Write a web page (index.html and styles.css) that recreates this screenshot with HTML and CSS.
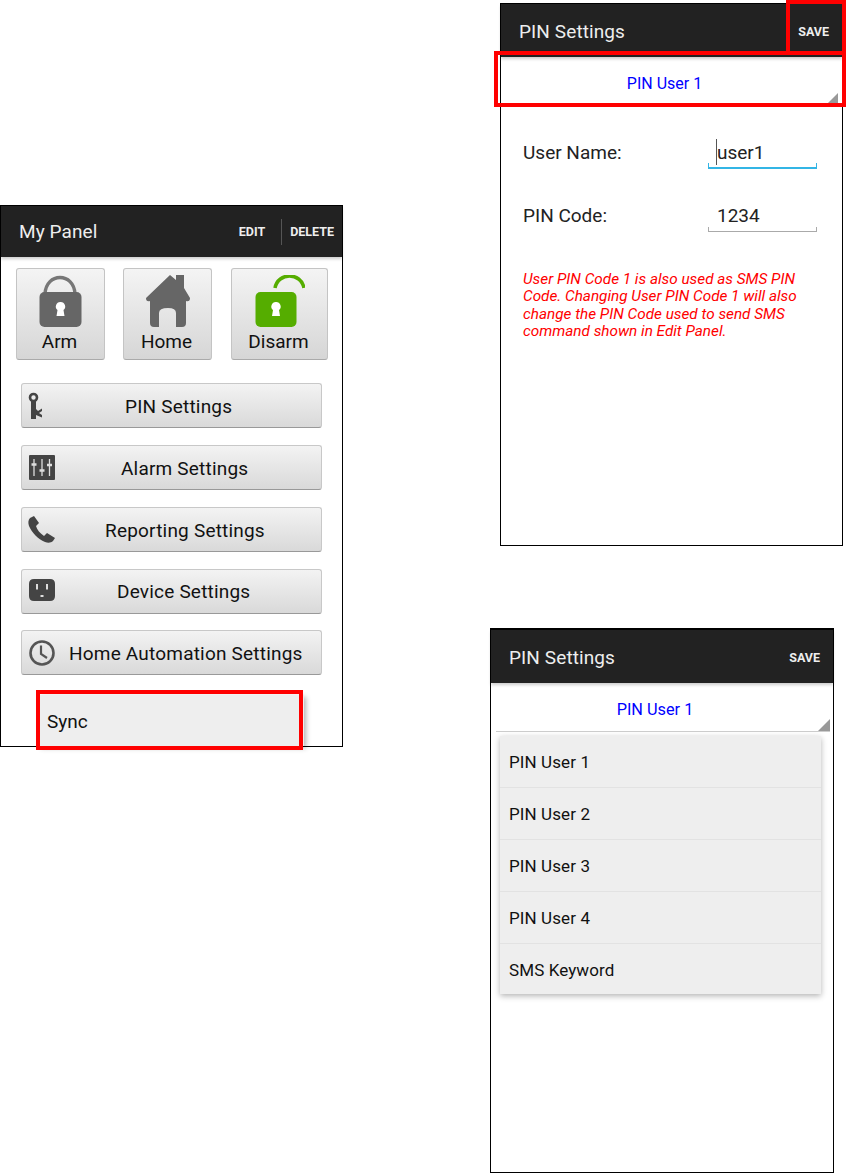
FILE: index.html
```html
<!DOCTYPE html>
<html lang="en">
<head>
    <meta charset="UTF-8">
    <meta name="viewport" content="width=device-width, initial-scale=1.0">
    <title>PIN Settings</title>
    <link rel="stylesheet" href="styles.css">
</head>
<body>
    <!-- main panel screen -->
    <div class="phone phone-panel">
        <div class="action-bar">
            <span class="bar-title">My Panel</span>
            <span class="bar-action">EDIT</span>
            <span class="bar-divider"></span>
            <span class="bar-action bar-action-last">DELETE</span>
        </div>
        <div class="mode-row">
            <div class="mode-btn mode-arm">
                <svg class="mode-icon" width="44" height="52" viewBox="0 0 44 52">
                    <path d="M6 19 C7 -3 35 -3 36 19" fill="none" stroke="#777" stroke-width="3.500"/>
                    <rect x="0.500" y="17" width="42" height="35" rx="5" fill="#666"/>
                    <path d="M21.500 27a4.500 4.500 0 0 1 3 8l1 6h-8l1-6a4.500 4.500 0 0 1 3-8z" fill="#fff"/>
                </svg>
                <span>Arm</span>
            </div>
            <div class="mode-btn mode-home">
                <svg class="mode-icon" width="44" height="52" viewBox="0 0 44 52">
                    <path d="M24 0 L30 5 V0 H38 V13 L44 23 Q44 27 40 26 V48 Q40 52 36 52 H30 V38 Q30 33 22 33 Q13 33 13 38 V52 H8 Q4 52 4 48 V26 Q0 27 0 23 Z" fill="#666"/>
                </svg>
                <span>Home</span>
            </div>
            <div class="mode-btn mode-disarm">
                <svg class="mode-icon" width="50" height="52" viewBox="0 0 50 52">
                    <path d="M20 13 C23 -3 46 -3 49 13" fill="none" stroke="#55ad00" stroke-width="3.500"/>
                    <rect x="0.500" y="17" width="41" height="35" rx="5" fill="#55ad00"/>
                    <path d="M21 27a4.500 4.500 0 0 1 3 8l1 6h-8l1-6a4.500 4.500 0 0 1 3-8z" fill="#fff"/>
                </svg>
                <span>Disarm</span>
            </div>
        </div>
        <div class="menu-list">
            <div class="menu-btn">
                <svg class="menu-icon" width="28" height="28" viewBox="0 0 28 28">
                    <circle cx="5.500" cy="5.500" r="3.500" fill="none" stroke="#444" stroke-width="2.600"/>
                    <path d="M3 9 H8 V17 L10 19 L14 16.500 V19 L11 21 L14 23 V25.500 L8 23 V27 H3 Z" fill="#444"/>
                </svg>
                <span class="menu-label menu-label-pin">PIN Settings</span>
            </div>
            <div class="menu-btn">
                <svg class="menu-icon" width="28" height="28" viewBox="0 0 28 28">
                    <rect x="1" y="1" width="26" height="25" rx="1" fill="#444"/>
                    <path d="M6 5 V22 M14 5 V22 M21.500 5 V22" stroke="#ddd" stroke-width="1.300"/>
                    <path d="M3.500 10.500 H8.500 M11.500 16.500 H16.500 M19 11 H24" stroke="#ddd" stroke-width="2.500"/>
                </svg>
                <span class="menu-label menu-label-alarm">Alarm Settings</span>
            </div>
            <div class="menu-btn">
                <svg class="menu-icon" width="28" height="28" viewBox="0 0 28 28">
                    <path d="M2 2 L6 0 L11 7 L8 10 C9 14 12 17 16 20 L19 17 L27 22 L25 25 C23 27 20 27 17 26 C10 23 4 17 1 10 C0 7 0 4 2 2 Z" fill="#444"/>
                </svg>
                <span class="menu-label menu-label-report">Reporting Settings</span>
            </div>
            <div class="menu-btn">
                <svg class="menu-icon" width="28" height="28" viewBox="0 0 28 28">
                    <path d="M6 1 H22 Q27 1 27 6 V18 Q27 23 22 23 H6 Q1 23 1 18 V6 Q1 1 6 1 Z" fill="#444"/>
                    <path d="M8 6 H10 V11.500 H8 Z M18 6 H20 V11.500 H18 Z M12.500 17 H15.500 V19 H12.500 Z" fill="#ddd"/>
                </svg>
                <span class="menu-label menu-label-device">Device Settings</span>
            </div>
            <div class="menu-btn menu-btn-last">
                <svg class="menu-icon" width="28" height="28" viewBox="0 0 28 28">
                    <circle cx="14" cy="14" r="11.500" fill="none" stroke="#555" stroke-width="2.600"/>
                    <path d="M13 6.500 V15 L19 19" fill="none" stroke="#555" stroke-width="2.200"/>
                </svg>
                <span class="menu-label menu-label-home">Home Automation Settings</span>
            </div>
        </div>
        <div class="overflow-menu">Sync</div>
    </div>
    <div class="callout callout-sync"></div>

    <!-- pin editor -->
    <div class="phone phone-editor">
        <div class="action-bar">
            <span class="bar-title">PIN Settings</span>
            <span class="bar-action bar-action-last">SAVE</span>
        </div>
        <div class="spinner">
            <span class="spinner-text">PIN User 1</span>
            <span class="spinner-arrow"></span>
        </div>
        <div class="form">
            <div class="form-row">
                <span class="form-label">User Name:</span>
                <span class="field field-focus"><span class="cursor"></span>user1</span>
            </div>
            <div class="form-row">
                <span class="form-label">PIN Code:</span>
                <span class="field">1234</span>
            </div>
            <p class="note">User PIN Code 1 is also used as SMS PIN Code. Changing User PIN Code 1 will also change the PIN Code used to send SMS command shown in Edit Panel.</p>
        </div>
    </div>
    <div class="callout callout-save"></div>
    <div class="callout callout-spinner"></div>

    <!-- pin user dropdown -->
    <div class="phone phone-dropdown">
        <div class="action-bar">
            <span class="bar-title">PIN Settings</span>
            <span class="bar-action bar-action-last">SAVE</span>
        </div>
        <div class="spinner spinner-open">
            <span class="spinner-text">PIN User 1</span>
            <span class="spinner-arrow"></span>
        </div>
        <ul class="dropdown">
            <li>PIN User 1</li>
            <li>PIN User 2</li>
            <li>PIN User 3</li>
            <li>PIN User 4</li>
            <li>SMS Keyword</li>
        </ul>
    </div>
</body>
</html>
```

FILE: styles.css
```css
html, body {
    margin: 0;
    padding: 0;
}
body {
    position: relative;
    width: 846px;
    height: 1174px;
    overflow: hidden;
    background-color: #fff;
    font-family: Roboto, 'Liberation Sans', sans-serif;
    color: #222;
}

/* the three screens sit on a free canvas */
.phone {
    position: absolute;
    box-sizing: border-box;
    border: 1px solid #000;
    background-color: #fff;
}
.phone-panel {
    left: 0;
    top: 205px;
    width: 343px;
    height: 542px;
}
.phone-editor {
    left: 500px;
    top: 3px;
    width: 343px;
    height: 543px;
}
.phone-dropdown {
    left: 490px;
    top: 628px;
    width: 344px;
    height: 545px;
    border-width: 2px 1px 1px 1px;
}

.action-bar {
    display: flex;
    align-items: center;
    height: 51px;
    padding-left: 18px;
    background-color: #222;
    color: #eee;
    box-shadow: 0 2px 3px rgba(0, 0, 0, 0.2);
}
.phone-editor .action-bar {
    height: 51px;
    padding-top: 2px;
}
.phone-dropdown .action-bar {
    height: 52px;
    padding-top: 1px;
}
.bar-title {
    flex: 1;
    font-size: 19px;
    letter-spacing: 0.1px;
}
.bar-action {
    font-size: 12.500px;
    font-weight: 700;
    color: #eee;
}
.bar-divider {
    width: 1px;
    height: 26px;
    margin: 0 8px 0 16px;
    background-color: #555;
}
.bar-action-last {
    margin-right: 8px;
}
.phone-editor .bar-action-last,
.phone-dropdown .bar-action-last {
    margin-right: 13px;
}

/* arm / home / disarm */
.mode-row {
    display: flex;
    padding: 11px 0 0 15px;
}
.mode-btn {
    box-sizing: border-box;
    display: flex;
    flex-direction: column;
    align-items: center;
    width: 89px;
    height: 92px;
    padding-top: 6px;
    border: 1px solid #c4c4c4;
    border-bottom-color: #aaa;
    border-radius: 3px;
    background: linear-gradient(#f4f4f4, #d6d6d6);
    font-size: 19px;
    color: #111;
}
.mode-btn span {
    margin-right: 2px;
}
.mode-home {
    margin-left: 18px;
}
.mode-disarm {
    width: 97px;
    margin-left: 19px;
}
.mode-icon {
    display: block;
    margin-bottom: 3px;
}

.menu-list {
    display: flex;
    flex-direction: column;
    gap: 17px;
    padding: 23px 20px 0;
}
.menu-btn {
    box-sizing: border-box;
    display: flex;
    align-items: center;
    position: relative;
    height: 45px;
    padding-left: 6px;
    border: 1px solid #c8c8c8;
    border-bottom-color: #999;
    border-radius: 3px;
    background: linear-gradient(#f3f3f3, #d9d9d9);
    font-size: 19px;
    letter-spacing: 0.2px;
    color: #111;
}
.menu-btn-last {
    margin-top: -1px;
}
.menu-icon {
    display: block;
    flex-shrink: 0;
}
.menu-label {
    position: absolute;
    top: 11px;
    white-space: nowrap;
}
.menu-label-pin { left: 103px; }
.menu-label-alarm { left: 99px; }
.menu-label-report { left: 83px; }
.menu-label-device { left: 95px; top: 10px; }
.menu-label-home { left: 47px; }

.overflow-menu {
    position: absolute;
    left: 38px;
    top: 489px;
    box-sizing: border-box;
    width: 265px;
    height: 51px;
    padding: 15px 8px;
    background-color: #eee;
    box-shadow: 2px 2px 5px rgba(0, 0, 0, 0.3);
    font-size: 19px;
    color: #111;
}

/* red annotations from the manual */
.callout {
    position: absolute;
    box-sizing: border-box;
    border: 4px solid #f00;
}
.callout-sync {
    left: 36px;
    top: 690px;
    width: 267px;
    height: 60px;
}
.callout-save {
    left: 786px;
    top: 0;
    width: 60px;
    height: 55px;
}
.callout-spinner {
    left: 494px;
    top: 51px;
    width: 352px;
    height: 56px;
}

.spinner {
    position: relative;
    box-sizing: border-box;
    height: 46px;
    text-align: center;
    padding-top: 17px;
    font-size: 16px;
    color: #00f;
}
.spinner-text {
    position: relative;
    left: -7px;
}
.spinner-arrow {
    position: absolute;
    right: 4px;
    bottom: 0;
    width: 0;
    height: 0;
    border-left: 10px solid transparent;
    border-bottom: 10px solid #999;
}
.spinner-open {
    height: 49px;
    margin: 0 3px 0 5px;
    padding-top: 17px;
    border-bottom: 1px solid #ccc;
    font-size: 16.300px;
}
.spinner-open .spinner-text {
    left: -8px;
}
.spinner-open .spinner-arrow {
    right: 0;
    border-left-width: 12px;
    border-bottom-width: 12px;
}

.form {
    padding: 26px 25px 0 22px;
}
.form-row {
    display: flex;
    justify-content: space-between;
    align-items: flex-end;
    height: 40px;
    margin-bottom: 23px;
    font-size: 19px;
    color: #222;
}
.form-label {
    margin-bottom: 5px;
}
.field {
    position: relative;
    box-sizing: border-box;
    width: 109px;
    height: 31px;
    padding: 3px 0 0 9px;
    border-bottom: 1px solid #aaa;
}
.field::before,
.field::after {
    content: "";
    position: absolute;
    bottom: 0;
    width: 1px;
    height: 4px;
    background-color: #aaa;
}
.field::before { left: 0; }
.field::after { right: 0; }
.field-focus {
    border-bottom: 2px solid #33b5e5;
}
.field-focus::before,
.field-focus::after {
    background-color: #33b5e5;
}
.cursor {
    position: absolute;
    left: 8px;
    top: 1px;
    width: 1px;
    height: 26px;
    background-color: #555;
}
.note {
    width: 292px;
    margin: 39px 0 0;
    font-size: 15.300px;
    font-style: italic;
    line-height: 17.300px;
    color: #f00;
}

.dropdown {
    list-style: none;
    margin: 4px 12px 0 9px;
    padding: 0;
    background-color: #eee;
    box-shadow: 0 2px 6px rgba(0, 0, 0, 0.3);
}
.dropdown li {
    box-sizing: border-box;
    height: 52px;
    padding: 16px 9px 0;
    border-bottom: 1px solid #e2e2e2;
    font-size: 17px;
    letter-spacing: 0.1px;
    color: #111;
}
.dropdown li:last-child {
    height: 50px;
    border-bottom: none;
}
```
